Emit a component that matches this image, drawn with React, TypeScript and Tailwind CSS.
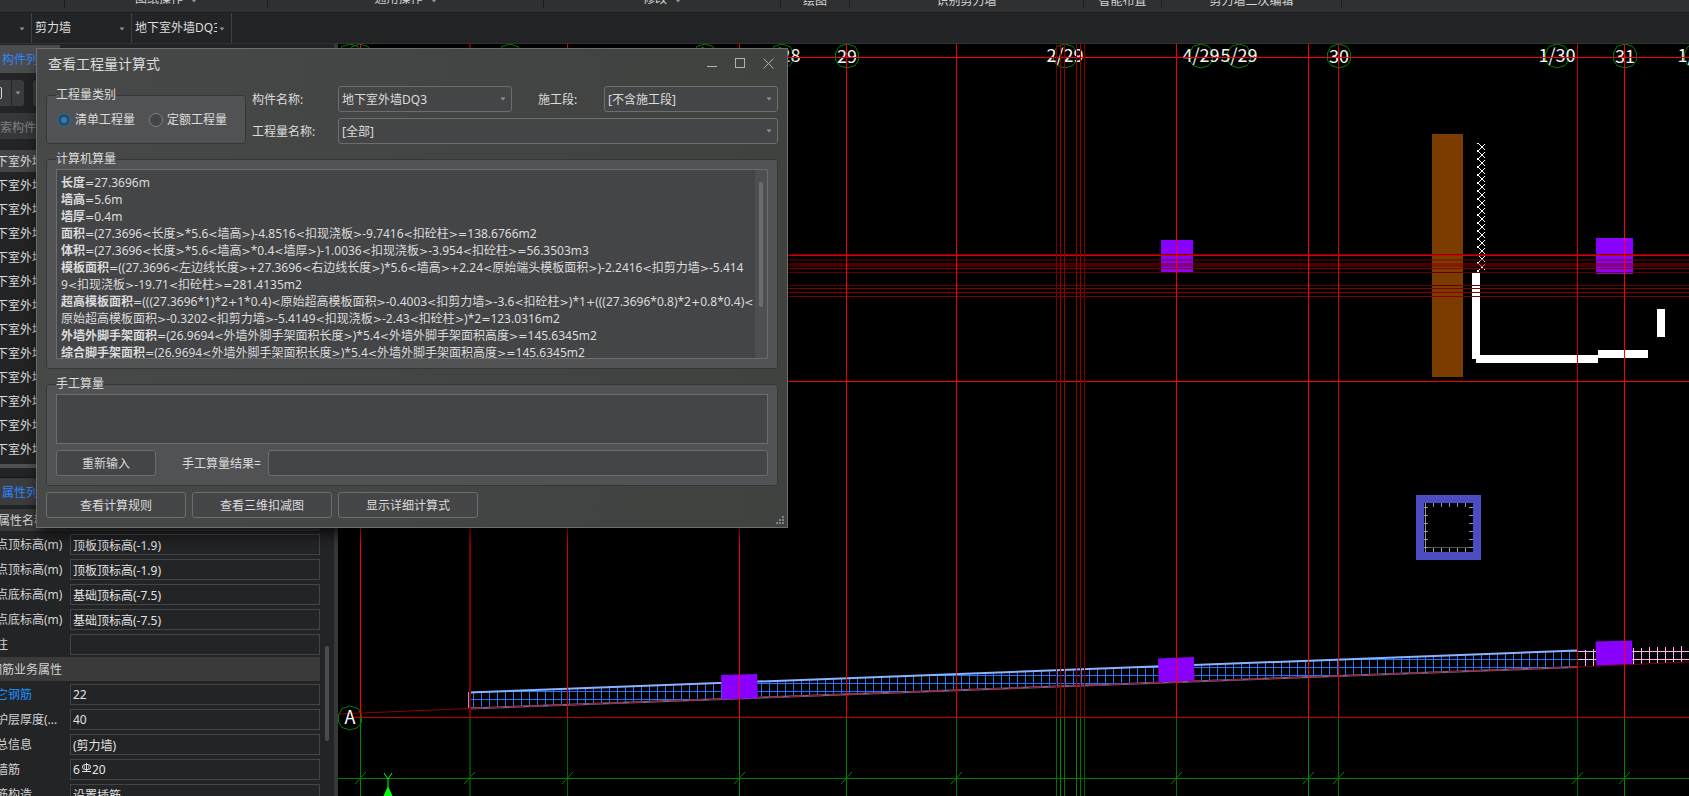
import React, { useState } from 'react';

const FONT = "font-['Noto_Sans','Noto_Sans_CJK_SC',sans-serif]";

const ribbonGroups = [
  { label: '', width: 'w-[65px]', menu: false },
  { label: '图纸操作', width: 'w-[203px]', menu: true },
  { label: '通用操作', width: 'w-[276px]', menu: true },
  { label: '修改', width: 'w-[237px]', menu: true },
  { label: '绘图', width: 'w-[69px]', menu: false },
  { label: '识别剪力墙', width: 'w-[234px]', menu: false },
  { label: '智能布置', width: 'w-[78px]', menu: false },
  { label: '剪力墙二次编辑', width: 'w-[180px]', menu: false },
];

const components = Array.from({ length: 13 }, (_, i) => `地下室外墙DQ${i + 1}`);

const levelProps = [
  { label: '起点顶标高(m)', value: '顶板顶标高(-1.9)' },
  { label: '终点顶标高(m)', value: '顶板顶标高(-1.9)' },
  { label: '起点底标高(m)', value: '基础顶标高(-7.5)' },
  { label: '终点底标高(m)', value: '基础顶标高(-7.5)' },
  { label: '备注', value: '' },
];

const rebarProps = [
  { label: '其它钢筋', value: '22', link: true },
  { label: '保护层厚度(...', value: '40' },
  { label: '汇总信息', value: '(剪力墙)' },
  { label: '压墙筋', value: '6#20', rebar: true },
  { label: '插筋构造', value: '设置插筋' },
];

const formulas: { name: string; lines: string[] }[] = [
  { name: '长度', lines: ['=27.3696m'] },
  { name: '墙高', lines: ['=5.6m'] },
  { name: '墙厚', lines: ['=0.4m'] },
  { name: '面积', lines: ['=(27.3696<长度>*5.6<墙高>)-4.8516<扣现浇板>-9.7416<扣砼柱>=138.6766m2'] },
  { name: '体积', lines: ['=(27.3696<长度>*5.6<墙高>*0.4<墙厚>)-1.0036<扣现浇板>-3.954<扣砼柱>=56.3503m3'] },
  {
    name: '模板面积',
    lines: [
      '=((27.3696<左边线长度>+27.3696<右边线长度>)*5.6<墙高>+2.24<原始端头模板面积>)-2.2416<扣剪力墙>-5.414',
      '9<扣现浇板>-19.71<扣砼柱>=281.4135m2',
    ],
  },
  {
    name: '超高模板面积',
    lines: [
      '=(((27.3696*1)*2+1*0.4)<原始超高模板面积>-0.4003<扣剪力墙>-3.6<扣砼柱>)*1+(((27.3696*0.8)*2+0.8*0.4)<',
      '原始超高模板面积>-0.3202<扣剪力墙>-5.4149<扣现浇板>-2.43<扣砼柱>)*2=123.0316m2',
    ],
  },
  { name: '外墙外脚手架面积', lines: ['=(26.9694<外墙外脚手架面积长度>)*5.4<外墙外脚手架面积高度>=145.6345m2'] },
  { name: '综合脚手架面积', lines: ['=(26.9694<外墙外脚手架面积长度>)*5.4<外墙外脚手架面积高度>=145.6345m2'] },
];

// Vertical grid axes: x, red above axis A, green below it
const axes = [
  { x: 360, red: '#ff0000', green: '#008800', tick: true },
  { x: 469, red: '#800000', green: '#004400', tick: true },
  { x: 470, red: '#800000', green: '#004400', tick: false },
  { x: 567, red: '#e00000', green: '#006800', tick: true },
  { x: 739, red: '#ff0000', green: '#008800', tick: true },
  { x: 846, red: '#f00000', green: '#008000', tick: true },
  { x: 956, red: '#f00000', green: '#007800', tick: true },
  { x: 1056, red: '#780000', green: '#007000', tick: false },
  { x: 1060, red: '#900000', green: '#008800', tick: false },
  { x: 1064, red: '#900000', green: '#007800', tick: false },
  { x: 1076, red: '#900000', green: '#008800', tick: false },
  { x: 1080, red: '#900000', green: '#007800', tick: false },
  { x: 1084, red: '#780000', green: '#005800', tick: false },
  { x: 1176, red: '#f00000', green: '#007000', tick: true },
  { x: 1308, red: '#ff0000', green: '#008800', tick: true },
  { x: 1338, red: '#d80000', green: '#007000', tick: true },
  { x: 1577, red: '#c80000', green: '#006800', tick: true },
  { x: 1624, red: '#ff0000', green: '#008800', tick: true },
];

const rows = [
  { y: 57, h: 1, fill: '#ff0000' },
  { y: 254, h: 1, fill: '#800000' },
  { y: 255, h: 1, fill: '#d80000' },
  { y: 259, h: 2, fill: '#800000', opacity: 0.5 },
  { y: 263, h: 4, fill: '#800000', opacity: 0.55 },
  { y: 268, h: 1, fill: '#880000' },
  { y: 272, h: 1, fill: '#600000' },
  { y: 285, h: 1, fill: '#600000' },
  { y: 288, h: 1, fill: '#800000' },
  { y: 292, h: 1, fill: '#880000' },
  { y: 296, h: 1, fill: '#800000' },
  { y: 381, h: 1, fill: '#ff0000' },
];

const bubbles = [
  { x: 350, label: '' },
  { x: 360, label: '' },
  { x: 510, label: '27' },
  { x: 705, label: '1/27' },
  { x: 782, label: '1/28' },
  { x: 847, label: '29' },
  { x: 1065, label: '2/29' },
  { x: 1201, label: '4/29' },
  { x: 1239, label: '5/29' },
  { x: 1339, label: '30' },
  { x: 1557, label: '1/30' },
  { x: 1625, label: '31' },
  { x: 1696, label: '1/31' },
];

function Arrow({ className = '' }: { className?: string }) {
  return (
    <svg viewBox="0 0 6 4" className={`pointer-events-none h-1 w-1.5 ${className}`} aria-hidden="true">
      <path d="M0.5 0.5h5L3 3.5z" fill="#929395" />
    </svg>
  );
}

function ToolSelect({ label, value, className }: { label: string; value: string; className: string }) {
  return (
    <div className={`relative h-full shrink-0 border-r border-[#3d3e40] ${className}`}>
      <select aria-label={label} className="h-full w-full appearance-none bg-transparent pl-[3px] pr-3.5 text-[#dedede] outline-none">
        <option>{value}</option>
      </select>
      <Arrow className="absolute right-1.5 top-3.5" />
    </div>
  );
}

function Field({ id, value }: { id: string; value: string }) {
  return (
    <div className="relative min-w-0 flex-1">
      <select
        id={id}
        className="block h-[26px] w-full appearance-none rounded-[3px] border border-[#6c6d6f] bg-[#444547] px-[3px] pt-0.5 text-[#dcdcdc] outline-none"
      >
        <option>{value}</option>
      </select>
      <Arrow className="absolute right-1.5 top-[11px]" />
    </div>
  );
}

function PropRow({ id, label, value, link, rebar }: { id: string; label: string; value: string; link?: boolean; rebar?: boolean }) {
  const box = 'h-[21px] min-w-0 flex-1 border border-[#434446] bg-[#232426] px-0.5 text-left text-[#e2e2e2] outline-none';
  const [before, after] = value.split('#');
  return (
    <div className="flex h-[25px] items-center">
      <label htmlFor={id} className={`-ml-4 w-[86px] shrink-0 whitespace-nowrap ${link ? 'text-[#1e90ff]' : ''}`}>
        {label}
      </label>
      {rebar ? (
        <button id={id} type="button" className={`flex items-center ${box}`}>
          {before}
          <svg viewBox="0 0 12 12" className="mb-1 h-3 w-3" fill="none" stroke="#e2e2e2" aria-hidden="true">
            <rect x="2.5" y="2.500" width="8" height="5" rx="2.500" />
            <path d="M6.500 1v9M2 9.500h9" />
            <path d="M4.500 2.500v5M8.500 2.500v5" stroke="#8a8a8a" />
          </svg>
          {after}
        </button>
      ) : (
        <input id={id} defaultValue={value} className={box} />
      )}
    </div>
  );
}

function SidePanel() {
  const [selected, setSelected] = useState(0);

  return (
    <aside className="flex w-[334px] shrink-0 flex-col overflow-hidden bg-[#232426] pt-px">
      {/* Component list */}
      <div className="flex h-7 shrink-0">
        <button type="button" className="h-full w-[60px] bg-[#4b4c4e] pl-0.5 pt-0.5 text-left text-[#2f86ff]">
          构件列表
        </button>
      </div>
      <div className="flex h-10 shrink-0 items-center gap-px">
        <button type="button" aria-label="新建" className="flex h-[26px] w-[11px] items-center bg-[#3b3c3e]">
          <span className="h-3 w-0.5 rounded-r-sm border border-l-0 border-[#dcdcdc]" />
        </button>
        <button type="button" aria-label="新建选项" className="flex h-[26px] w-3 items-center justify-center rounded-r-[3px] bg-[#3b3c3e]">
          <Arrow />
        </button>
        <button type="button" aria-label="复制" className="ml-2 h-[26px] w-[60px] rounded-[3px] bg-[#3b3c3e]" />
      </div>
      <input
        aria-label="搜索构件"
        placeholder="搜索构件..."
        className="-ml-3 h-[26px] shrink-0 bg-[#37383a] pt-0.5 placeholder-[#808184] outline-none"
      />
      <ul className="mt-2.5 h-[315px] shrink-0 overflow-hidden">
        {components.map((name, i) => (
          <li key={name} className="h-6 pt-px">
            <button
              type="button"
              onClick={() => setSelected(i)}
              className={`-ml-4 h-[22px] w-full whitespace-nowrap pt-px text-left text-[#dcdcdc] ${selected === i ? 'bg-[#434446]' : ''}`}
            >
              {name}
            </button>
          </li>
        ))}
      </ul>
      <div className="h-1 shrink-0 bg-[#505153]" />

      {/* Properties */}
      <div className="mt-[9px] flex h-7 shrink-0 border-t border-[#151618] bg-[#3b3c3e] pt-0.5">
        <button type="button" className="pl-0.5 text-[#2f86ff]">
          属性列表
        </button>
      </div>
      <div className="mr-3.5 mt-1 flex h-[22px] shrink-0 items-center bg-[#3a3a3b] pt-0.5">
        <span className="-ml-0.5 w-[71px] border-r border-[#2c2d2f]">属性名称</span>
        <span className="pl-1">属性值</span>
      </div>
      <div className="flex min-h-0 flex-1 gap-[5px] overflow-hidden pt-px">
        <div className="w-80 shrink-0">
          {levelProps.map((p, i) => (
            <PropRow key={p.label} id={`level-${i}`} {...p} />
          ))}
          <div className="mb-px flex h-6 items-center bg-[#3a3a3b] pt-px">
            <span className="-ml-2.5">钢筋业务属性</span>
          </div>
          {rebarProps.map((p, i) => (
            <PropRow key={p.label} id={`rebar-${i}`} {...p} />
          ))}
        </div>
        <div className="mt-[114px] h-[95px] w-1 rounded-full bg-[#4b4c50]" />
      </div>
    </aside>
  );
}

function Drawing() {
  return (
    <svg viewBox="338 44 1351 752" preserveAspectRatio="xMinYMin slice" className="block h-full w-full bg-black" role="img" aria-label="图纸">
      <defs>
        <pattern id="wallGrid" x="473" y="651" width="8" height="8" patternUnits="userSpaceOnUse">
          <path d="M0.5 0v8M0 0.5h8" stroke="#2273f5" />
        </pattern>
        <pattern id="pinkGrid" x="1577" y="651" width="8" height="8" patternUnits="userSpaceOnUse">
          <path d="M0.5 0v8M0 0.5h8" stroke="#ffb4f4" />
        </pattern>
        <pattern id="cross" x="1478" y="143" width="8" height="8" patternUnits="userSpaceOnUse">
          <path d="M0 0l8 8M8 0l-8 8" stroke="#fff" />
        </pattern>
      </defs>

      {/* Sloped wall */}
      <path d="M469 692L1577 651V667L469 708z" fill="url(#wallGrid)" />
      <path d="M469 692.5L1577 650.5" stroke="#8db2ff" strokeWidth="2" />
      <path d="M469 708.5L1577 667" stroke="#7f5f8c" strokeWidth="2" />
      <path d="M468.5 692V708" stroke="#b08cc0" />
      <path d="M1577 651H1689V660H1577z" fill="url(#pinkGrid)" />
      <path d="M1585.5 650V666M1593.5 649V666M1633.5 648V664M1641.5 648V664M1649.5 647V663M1657.5 647V663M1665.5 647V663M1673.5 647V662M1681.5 646V662" stroke="#ffb4f4" />
      <path d="M338 714L469 708.5" stroke="#900000" />
      <path d="M469 708.5L1577 667" stroke="#a01018" strokeDasharray="14 6" />
      <path d="M1577 667L1689 662" stroke="#7c0000" />

      {/* Beam and outline walls */}
      <rect x="1432" y="134" width="31" height="243" fill="#7c3c00" />
      <rect x="1477" y="143" width="8" height="129" fill="url(#cross)" />
      <g fill="#fff">
        <rect x="1472" y="272" width="8" height="87" />
        <rect x="1476" y="355" width="122" height="8" />
        <rect x="1598" y="350" width="50" height="8" />
        <rect x="1657" y="309" width="8" height="28" />
      </g>

      {/* Columns */}
      <g fill="#8a00ff">
        <rect x="1161" y="240" width="32" height="32" />
        <rect x="1596" y="238" width="37" height="36" />
        <path d="M721 675L757 674L758 698L722 699.5z" />
        <path d="M1158 658.5L1194 657L1194.500 680.500L1158.500 682z" />
        <path d="M1595.500 641.500L1632 640.500L1632.500 664L1596.500 665.500z" />
      </g>

      {/* Sump pit */}
      <rect x="1420" y="499" width="57" height="57" fill="none" stroke="#4d4dc3" strokeWidth="8" />
      <path d="M1425.500 503v49" stroke="#9a9a9a" />
      <path d="M1426 547.5h47" stroke="#555" />
      <g stroke="#9a9a9a">
        {[1433, 1441, 1449, 1457, 1465].map((x) => (
          <path key={x} d={`M${x}.5 503v4M${x}.5 548v4`} />
        ))}
        {[507, 515, 523, 531, 539, 547].map((y) => (
          <path key={y} d={`M1424 ${y}.5h4M1469 ${y}.5h4`} />
        ))}
      </g>

      {/* Axis bubbles */}
      {bubbles.map((b) => (
        <g key={b.x}>
          <path
            d="M0 -12L8 -9.500L11.500 -3V4L8 9.500L0 12L-8 9.500L-11.500 4V-3L-8 -9.500z"
            transform={`translate(${b.x} 56)`}
            fill="none"
            stroke="#008000"
          />
          <text
            x={b.x}
            y={b.label.includes('/') ? 62 : 63}
            textAnchor="middle"
            fontSize="18"
            fill="#f4f4f4"
            className="font-['Noto_Sans_CJK_SC',sans-serif]"
          >
            {b.label}
          </text>
        </g>
      ))}
      <path
        d="M0 -12L8 -9.500L11.500 -3V4L8 9.500L0 12L-8 9.500L-11.500 4V-3L-8 -9.500z"
        transform="translate(350 718)"
        fill="none"
        stroke="#008000"
      />

      {/* Grid lines */}
      {rows.map((r) => (
        <rect key={r.y} x="338" y={r.y} width="1351" height={r.h} fill={r.fill} opacity={r.opacity ?? 1} />
      ))}
      {axes.map((a) => (
        <g key={a.x}>
          <rect x={a.x} y="44" width="1" height="673" fill={a.red} />
          <rect x={a.x} y="718" width="1" height="78" fill={a.green} />
          {a.tick && <path d={`M${a.x - 5} 784L${a.x + 6} 772`} stroke="#008800" />}
        </g>
      ))}
      <rect x="354" y="717" width="1335" height="1" fill="#c80000" />
      <rect x="338" y="778" width="1351" height="1" fill="#008000" />
      <text x="350" y="724" textAnchor="middle" fontSize="18" fill="#fff" className="font-['Noto_Sans_CJK_SC',sans-serif]">
        A
      </text>

      {/* Y axis marker */}
      <path d="M384 773L388 779L392 773M388 779V787" fill="none" stroke="#00ff00" />
      <path d="M388 786L393 797H383z" fill="#00ff00" />
    </svg>
  );
}

// Operators are set in a wider face than the digits around them
function Expression({ text }: { text: string }) {
  return (
    <>
      {text.split(/([<>=+])/).map((part, i) =>
        i % 2 ? (
          <span key={i} className="font-['DejaVu_Sans',sans-serif] text-[11px] leading-none">
            {part}
          </span>
        ) : (
          part
        ),
      )}
    </>
  );
}

function FormulaDialog() {
  const [kind, setKind] = useState('list');
  const group = 'min-w-0 rounded-[3px] border border-[#353637] bg-[#515254] px-[9px]';
  const button = 'h-[26px] rounded-[3px] border border-[#6c6d6f] bg-[#444547] pt-0.5 text-center';
  const radio =
    "relative h-3.5 w-3.5 appearance-none rounded-full border border-[#808183] bg-[#444547] checked:border-[#0a78c8] checked:after:absolute checked:after:inset-[3px] checked:after:rounded-full checked:after:bg-[#0a84d8] checked:after:content-['']";

  return (
    <section
      role="dialog"
      aria-labelledby="dialog-title"
      className="absolute left-9 top-12 w-[752px] border border-[#6d6e6e] bg-linear-to-r from-[#474949] to-[#404240] px-[9px] pb-[9px] text-[#dcdcdc] shadow-lg shadow-black/60"
    >
      <header className="flex h-9 items-start justify-between">
        <h1 id="dialog-title" className="pl-0.5 pt-[5px] text-sm leading-5">
          查看工程量计算式
        </h1>
        <div className="flex gap-[17px] pr-1 pt-[9px]">
          <button type="button" aria-label="最小化">
            <svg viewBox="0 0 11 11" className="h-[11px] w-[11px]">
              <path d="M0 8.500h10" stroke="#b0b1b1" />
            </svg>
          </button>
          <button type="button" aria-label="最大化">
            <svg viewBox="0 0 11 11" className="h-[11px] w-[11px]">
              <rect x="0.500" y="0.500" width="9" height="9" fill="none" stroke="#b0b1b1" />
            </svg>
          </button>
          <button type="button" aria-label="关闭">
            <svg viewBox="0 0 11 11" className="h-[11px] w-[11px]">
              <path d="M0.500 0.500l10 10M10.500 0.500l-10 10" stroke="#b0b1b1" />
            </svg>
          </button>
        </div>
      </header>

      <div className="flex items-end gap-1.5">
        <fieldset className={`h-[59px] w-[200px] ${group}`}>
          <legend className="leading-5">工程量类别</legend>
          <div className="flex gap-3.5 pl-px pt-[7px]">
            <label className="flex items-center gap-1">
              <input type="radio" name="kind" className={radio} checked={kind === 'list'} onChange={() => setKind('list')} />
              清单工程量
            </label>
            <label className="flex items-center gap-1">
              <input type="radio" name="kind" className={radio} checked={kind === 'quota'} onChange={() => setKind('quota')} />
              定额工程量
            </label>
          </div>
        </fieldset>
        <div className="flex min-w-0 flex-1 flex-col gap-1.5">
          <div className="flex items-center">
            <label htmlFor="component" className="w-[86px] pt-0.5">构件名称:</label>
            <Field id="component" value="地下室外墙DQ3" />
            <label htmlFor="stage" className="ml-[26px] w-[66px] pt-0.5">施工段:</label>
            <Field id="stage" value="[不含施工段]" />
          </div>
          <div className="flex items-center">
            <label htmlFor="quantity" className="w-[86px] pt-0.5">工程量名称:</label>
            <Field id="quantity" value="[全部]" />
          </div>
        </div>
      </div>

      <fieldset className={`mt-[5px] pb-[9px] ${group}`}>
        <legend className="leading-5">计算机算量</legend>
        <div className="flex h-[190px] overflow-hidden border border-[#6c6d6f] bg-[#444547]">
          <div className="min-w-0 flex-1 overflow-hidden whitespace-nowrap pl-1 pt-1 leading-[17px]">
            {formulas.map((f) => (
              <p key={f.name}>
                <b>{f.name}</b>
                {f.lines.map((line, i) => (
                  <React.Fragment key={line}>
                    {i > 0 && <br />}
                    <Expression text={line} />
                  </React.Fragment>
                ))}
              </p>
            ))}
          </div>
          <div className="w-3 bg-[#4e4f51] pl-1 pt-3">
            <div className="h-[125px] w-1 rounded-full bg-[#6c6d6f]" />
          </div>
        </div>
      </fieldset>

      <fieldset className={`mt-[5px] pb-[9px] ${group}`}>
        <legend className="leading-5">手工算量</legend>
        <textarea aria-label="手工算量" className="block h-[50px] w-full resize-none border border-[#6c6d6f] bg-[#444547] outline-none" />
        <div className="mt-1.5 flex items-center">
          <button type="button" className={`w-[100px] ${button}`}>重新输入</button>
          <label htmlFor="result" className="ml-[26px] w-[86px] pt-0.5">手工算量结果=</label>
          <input id="result" className="h-[26px] min-w-0 flex-1 rounded-[3px] border border-[#6c6d6f] bg-[#444547] px-1 outline-none" />
        </div>
      </fieldset>

      <footer className="mt-1.5 flex gap-1.5">
        <button type="button" className={`w-[140px] ${button}`}>查看计算规则</button>
        <button type="button" className={`w-[140px] ${button}`}>查看三维扣减图</button>
        <button type="button" className={`w-[140px] ${button}`}>显示详细计算式</button>
      </footer>
      <svg viewBox="0 0 8 8" className="absolute bottom-[3px] right-[3px] h-2 w-2" fill="#7c858c" aria-hidden="true">
        <path d="M0 6h2v2H0zM3 6h2v2H3zM6 6h2v2H6zM3 3h2v2H3zM6 3h2v2H6zM6 0h2v2H6z" />
      </svg>
    </section>
  );
}

export default function App() {
  return (
    <div className={`relative flex h-screen flex-col overflow-hidden bg-[#232426] text-xs text-[#d4d4d4] ${FONT}`}>
      {/* Ribbon group captions */}
      <nav className="flex h-3 shrink-0 overflow-hidden bg-[#2f3032]">
        {ribbonGroups.map((g) => (
          <div key={g.label} className={`flex h-2 shrink-0 justify-center border-r border-[#1c1d1f] ${g.width}`}>
            {g.label && (
              <button type="button" className={`flex h-4 items-center gap-2 leading-4 ${g.menu ? '-mt-[9px]' : '-mt-[7px]'}`}>
                {g.label}
                {g.menu && <Arrow className="mt-1" />}
              </button>
            )}
          </div>
        ))}
      </nav>

      {/* Component picker */}
      <div className="flex h-8 shrink-0 border-b border-t border-b-[#323335] border-t-[#1a1b1d]">
        <ToolSelect label="楼层" value="" className="w-8" />
        <ToolSelect label="构件类型" value="剪力墙" className="w-[100px]" />
        <ToolSelect label="构件" value="地下室外墙DQ3" className="w-[100px]" />
      </div>

      <div className="flex min-h-0 flex-1">
        <SidePanel />
        <div className="w-1 shrink-0 bg-[#37383a]" />
        <main className="min-w-0 flex-1">
          <Drawing />
        </main>
      </div>

      <FormulaDialog />
    </div>
  );
}
